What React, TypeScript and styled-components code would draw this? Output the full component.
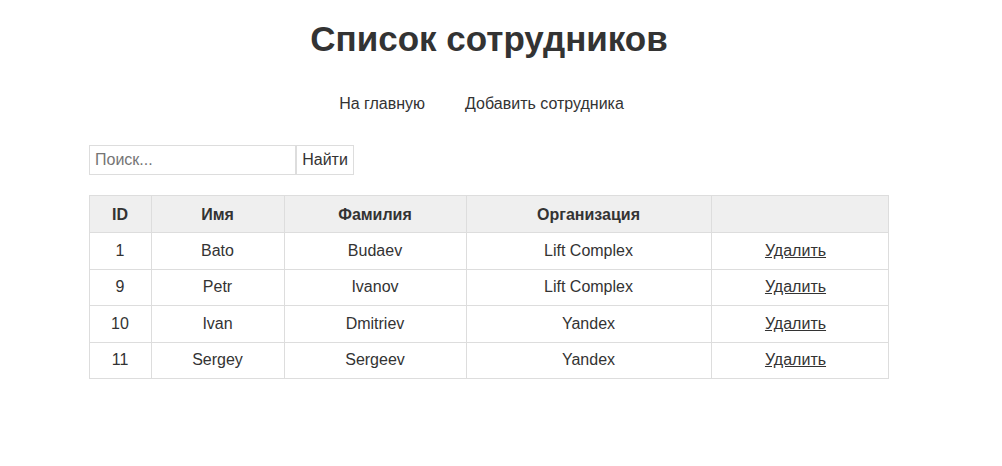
import React from "react";
import styled, { createGlobalStyle } from "styled-components";

const GlobalStyle = createGlobalStyle`
  html, body {
    margin: 0;
    padding: 0;
    background: #ffffff;
    font-family: "Liberation Sans", Arial, sans-serif;
    color: #333333;
  }
`;

const Page = styled.div`
  width: 978px;
  display: flex;
  flex-direction: column;
  align-items: center;
  padding-top: 18px;
`;

const Title = styled.h1`
  margin: 0;
  font-size: 35px;
  font-weight: bold;
  line-height: 41px;
  color: #333333;
`;

const Nav = styled.nav`
  display: flex;
  gap: 40px;
  margin-top: 36px;
  padding-right: 15px;
  font-size: 16px;
  line-height: 18px;
`;

const NavLink = styled.a`
  color: #333333;
  text-decoration: none;
`;

const SearchRow = styled.form`
  width: 800px;
  display: flex;
  margin-top: 32px;
  height: 30px;
`;

const SearchInput = styled.input`
  box-sizing: border-box;
  width: 207px;
  height: 30px;
  margin: 0;
  padding: 0 5px;
  border: 1px solid #dddddd;
  font-family: "Liberation Sans", Arial, sans-serif;
  font-size: 16px;
  color: #333333;
  outline: none;
  &::placeholder {
    color: #757575;
  }
`;

const SearchButton = styled.button`
  box-sizing: border-box;
  width: 58px;
  height: 30px;
  margin: 0;
  padding: 0 5px;
  border: 1px solid #dddddd;
  background: #ffffff;
  font-family: "Liberation Sans", Arial, sans-serif;
  font-size: 16px;
  color: #333333;
  cursor: pointer;
`;

const Table = styled.table`
  width: 799px;
  margin: 20px 0 0 -1px;
  border-collapse: collapse;
  table-layout: fixed;
  font-size: 16px;
`;

const Col = styled.col<{ $w: number }>`
  width: ${(p) => p.$w}px;
`;

const HeadCell = styled.th`
  background: #efefef;
  border: 1px solid #dddddd;
  padding: 9px 8px 8px;
  line-height: 19px;
  font-weight: bold;
  text-align: center;
  color: #333333;
`;

const Cell = styled.td<{ $action?: boolean }>`
  border: 1px solid #dddddd;
  padding: 8.5px ${(p) => (p.$action ? "16px" : "8px")} 8.5px 8px;
  line-height: 18.5px;
  text-align: center;
  color: #333333;
`;

const DeleteLink = styled.a`
  color: #333333;
  text-decoration: underline;
  cursor: pointer;
`;

const employees = [
  { id: 1, name: "Bato", surname: "Budaev", org: "Lift Complex" },
  { id: 9, name: "Petr", surname: "Ivanov", org: "Lift Complex" },
  { id: 10, name: "Ivan", surname: "Dmitriev", org: "Yandex" },
  { id: 11, name: "Sergey", surname: "Sergeev", org: "Yandex" },
];

const widths = [62, 133, 182, 245, 177];

export default function App() {
  return (
    <>
      <GlobalStyle />
      <Page>
        <Title>Список сотрудников</Title>
        <Nav>
          <NavLink href="#">На главную</NavLink>
          <NavLink href="#">Добавить сотрудника</NavLink>
        </Nav>
        <SearchRow onSubmit={(e) => e.preventDefault()}>
          <SearchInput placeholder="Поиск..." />
          <SearchButton type="submit">Найти</SearchButton>
        </SearchRow>
        <Table>
          <colgroup>
            {widths.map((w, i) => (
              <Col key={i} $w={w} />
            ))}
          </colgroup>
          <thead>
            <tr>
              <HeadCell>ID</HeadCell>
              <HeadCell>Имя</HeadCell>
              <HeadCell>Фамилия</HeadCell>
              <HeadCell>Организация</HeadCell>
              <HeadCell></HeadCell>
            </tr>
          </thead>
          <tbody>
            {employees.map((e) => (
              <tr key={e.id}>
                <Cell>{e.id}</Cell>
                <Cell>{e.name}</Cell>
                <Cell>{e.surname}</Cell>
                <Cell>{e.org}</Cell>
                <Cell $action>
                  <DeleteLink>Удалить</DeleteLink>
                </Cell>
              </tr>
            ))}
          </tbody>
        </Table>
      </Page>
    </>
  );
}
